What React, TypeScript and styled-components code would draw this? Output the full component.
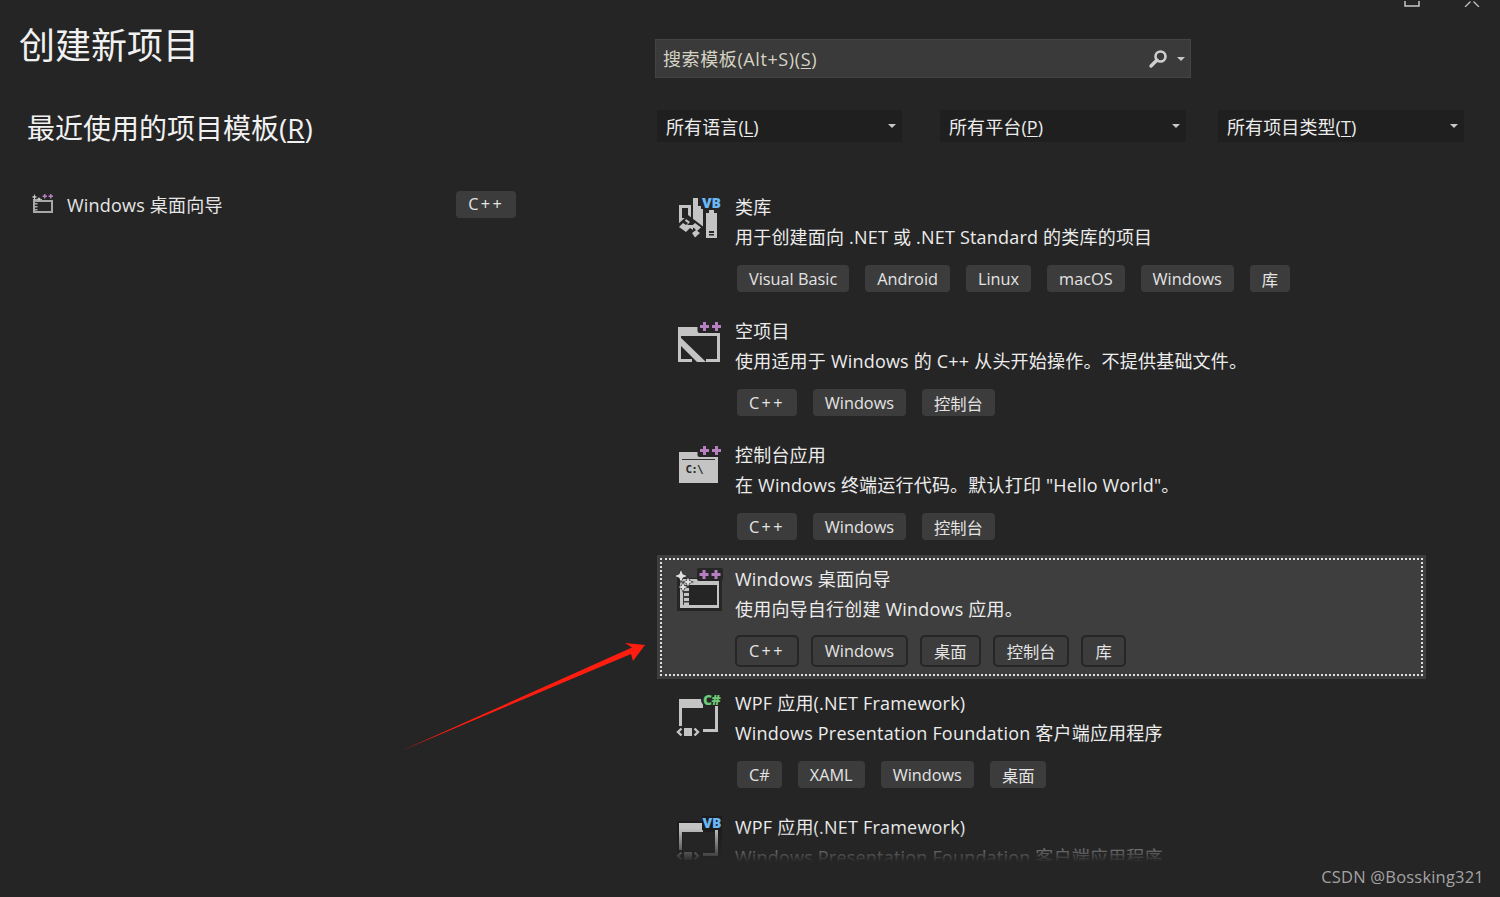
import React from 'react';
import styled, { createGlobalStyle } from 'styled-components';

const GlobalStyle = createGlobalStyle`
  html, body { margin: 0; padding: 0; background: #252525; }
  body { font-family: "Open Sans", "Noto Sans CJK SC", sans-serif; }
`;

const Page = styled.div`
  position: relative;
  width: 1500px;
  height: 897px;
  overflow: hidden;
  background: #252525;
  color: #f1f1f1;
`;

const WindowBar = styled.div`
  display: flex;
  justify-content: flex-end;
  align-items: flex-end;
  gap: 44px;
  height: 7px;
  padding-right: 20px;
  overflow: hidden;
  svg { flex: none; display: block; }
`;

const Main = styled.div`
  display: grid;
  grid-template-columns: 655px 536px;
`;

const LeftColumn = styled.div`
  display: flex;
  flex-direction: column;
`;

const PageTitle = styled.h1`
  margin: 14px 0 0 19px;
  font-size: 36px;
  line-height: 50px;
  font-weight: 400;
`;

const RecentTitle = styled.h2`
  margin: 37px 0 0 27px;
  font-size: 28px;
  line-height: 40px;
  font-weight: 400;
`;

const RecentRow = styled.div`
  display: flex;
  align-items: center;
  width: 484px;
  height: 28px;
  margin: 42px 0 0 32px;
`;

const RecentName = styled.span`
  flex: 1;
  margin-left: 13px;
  font-size: 18px;
  letter-spacing: 0.2px;
  color: #e6e6e6;
`;

const RightColumn = styled.div`
  display: flex;
  flex-direction: column;
`;

const SearchBox = styled.div`
  display: flex;
  align-items: center;
  box-sizing: border-box;
  height: 39px;
  margin-top: 32px;
  padding: 0 5px 0 7px;
  background: #3a3a3a;
  border: 1px solid #444444;
  font-size: 18px;
  color: #d6d3c4;
`;

const SearchText = styled.span`
  flex: 1;
  letter-spacing: 0.6px;
  margin-top: -2px;
`;

const Caret = styled.span`
  flex: none;
  width: 0;
  height: 0;
  border-left: 4.500px solid transparent;
  border-right: 4.500px solid transparent;
  border-top: 4.500px solid #c8c8c8;
`;

const FilterRow = styled.div`
  display: flex;
  width: 807px;
  margin: 32px 0 0 2px;
`;

const Filter = styled.div<{ $width: number; $gap: number }>`
  display: flex;
  align-items: center;
  justify-content: space-between;
  box-sizing: border-box;
  flex: none;
  width: ${p => p.$width}px;
  height: 32px;
  margin-right: ${p => p.$gap}px;
  padding: 0 6px 0 9px;
  background: #1f1f1f;
  font-size: 18px;
  letter-spacing: 0.1px;
  color: #ececec;
`;

const Key = styled.span`
  text-decoration: underline;
  text-underline-offset: 2px;
`;

const TemplateList = styled.div`
  position: relative;
  width: 800px;
  height: 679px;
  margin-top: 41px;
  overflow: hidden;
`;

const ListFade = styled.div`
  position: absolute;
  left: 0;
  right: 0;
  bottom: 0;
  height: 34px;
  background: linear-gradient(to bottom, rgba(37, 37, 37, 0), #252525);
`;

const Row = styled.div<{ $selected?: boolean }>`
  display: flex;
  box-sizing: border-box;
  width: 769px;
  height: 124px;
  margin-left: 2px;
  padding: 12px 0 0 18px;
  background: ${p => (p.$selected ? '#3e3e3e' : 'transparent')};
  outline: ${p => (p.$selected ? '2px dotted #e2e2e2' : 'none')};
  outline-offset: -5px;
`;

const IconSlot = styled.div`
  flex: none;
  width: 48px;
  height: 48px;
  margin: 1px 12px 0 0;
  svg { display: block; overflow: visible; }
`;

const RowBody = styled.div`
  display: flex;
  flex-direction: column;
`;

const RowTitle = styled.div`
  font-size: 18px;
  line-height: 24px;
  letter-spacing: 0.2px;
  color: #ececec;
`;

const RowText = styled.div`
  margin-top: 6px;
  font-size: 18px;
  line-height: 24px;
  letter-spacing: 0.2px;
  color: #ececec;
  white-space: nowrap;
`;

const TagRow = styled.div<{ $selected?: boolean }>`
  display: flex;
  gap: ${p => (p.$selected ? 12 : 16)}px;
  margin: ${p => (p.$selected ? '14px 0 0 0' : '16px 0 0 2px')};
`;

const Tag = styled.span<{ $selected?: boolean; $spaced?: boolean }>`
  display: flex;
  align-items: center;
  box-sizing: border-box;
  height: ${p => (p.$selected ? 32 : 27)}px;
  padding: 0 12px;
  border-radius: ${p => (p.$selected ? 5 : 4)}px;
  border: ${p => (p.$selected ? '2px solid #262626' : 'none')};
  background: #3c3c3c;
  font-size: 16.300px;
  letter-spacing: ${p => (p.$spaced ? 2.300 : 0)}px;
  color: #e4e4e4;
  white-space: nowrap;
`;

const ArrowLayer = styled.svg`
  position: absolute;
  left: 395px;
  top: 640px;
`;

const Watermark = styled.div`
  position: absolute;
  right: 16px;
  bottom: 9px;
  font-size: 16.500px;
  line-height: 22px;
  letter-spacing: 0.2px;
  color: #a3a3a3;
`;

const GRAY = '#c4c4c4';
const PURPLE = '#b57fc0';
const BLUE = '#6ab7f5';
const GREEN = '#6fca78';
const BADGE_FONT = "'Open Sans', sans-serif";

const Pluses = ({ x, y, back = '#252525' }: { x: number; y: number; back?: string }) => (
  <g transform={`translate(${x} ${y})`}>
    <rect x={-2} y={-1} width={26} height={13} rx={2} fill={back} />
    <path d="M3.500 1h3v3h3v3h-3v3h-3v-3h-3v-3h3z" fill={PURPLE} />
    <path d="M15.500 1h3v3h3v3h-3v3h-3v-3h-3v-3h3z" fill={PURPLE} />
  </g>
);

const LibraryIcon = () => (
  <svg width="48" height="48" viewBox="0 0 48 48">
    <path fillRule="evenodd" d="M4 9h12v22H4zM7 12v10h6V12z" fill={GRAY} />
    <path d="M18 2h5v8h5v24H18z" fill={GRAY} />
    <path fillRule="evenodd" d="M31 17h3v-3h5v3h3v25H31zM34 35v2h5v-2zM34 38v1.500h5V38z" fill={GRAY} />
    <rect x={26} y={0} width={21} height={13} fill="#252525" />
    <path d="M13 19l17 13-2 4-9 9-4-1-14-10 1-5z" fill="#252525" />
    <path d="M11 23l4 3-3 3h6v5l-3-2-4 4-7-5 4-4 3 2 2-2-3-2zM20 27l6 4.500-4 3.500-3-3-3-1.500zM17 37l4-3 4 3-5 4.500z" fill={GRAY} />
    <text x={27} y={12} fontFamily={BADGE_FONT} fontWeight={800} fontSize={14} letterSpacing={-0.3} fill={BLUE}>VB</text>
  </svg>
);

const EmptyIcon = () => (
  <svg width="48" height="48" viewBox="0 0 48 48">
    <path d="M3 7h23v6h19v29H31v-3h11V16H6v23h11v3H3z" fill={GRAY} />
    <path d="M3 15l28 27h-9L3 23z" fill={GRAY} />
    <Pluses x={24.500} y={1} />
  </svg>
);

const ConsoleIcon = () => (
  <svg width="48" height="48" viewBox="0 0 48 48">
    <path d="M4 8h39v31H4z" fill={GRAY} />
    <rect x={7} y={15} width={33} height={1} fill="#333333" />
    <text x={10.500} y={29} fontFamily="'DejaVu Sans Mono', monospace" fontWeight={700} fontSize={11} letterSpacing={-0.9} fill="#2b2b2b">C:\</text>
    <Pluses x={24.500} y={1} />
  </svg>
);

const WizardIcon = () => (
  <svg width="48" height="48" viewBox="0 0 48 48">
    <rect x={2} y={10} width={45} height={33} fill="#262626" />
    <path fillRule="evenodd" d="M5 11h39v29H5zM8 17v20h34V17z" fill={GRAY} />
    <rect x={14} y={17} width={28} height={20} fill="#252525" />
    <rect x={8} y={17} width={6} height={20} fill="#3a3a3a" />
    <path d="M9 20h5v3H9zM9 25h5v3H9zM9 30h5v3H9zM9 34.500h5v2.500H9z" fill={GRAY} />
    <g fill="#e0e0e0" stroke="#262626" strokeWidth={1.200} paintOrder="stroke">
      <path d="M6 2l1.700 4.300 4.300 1.700-4.300 1.700-1.700 4.300-1.700-4.300-4.300-1.700 4.300-1.700z" />
      <path d="M13 9.500l1.300 3.200 3.200 1.300-3.200 1.300-1.300 3.200-1.300-3.200-3.200-1.300 3.200-1.300z" />
      <path d="M8 14.500l1.300 3.200 3.200 1.300-3.200 1.300-1.300 3.200-1.300-3.200-3.200-1.300 3.200-1.300z" />
    </g>
    <Pluses x={24} y={1} back="#262626" />
  </svg>
);

const WpfShape = () => (
  <>
    <path d="M4 7h24v9H7v18H4z" fill={GRAY} />
    <path d="M40 14h3v26H28v-3h12z" fill={GRAY} />
    <rect x={9} y={36} width={8} height={8} fill={GRAY} />
    <path d="M6.500 36.500l-3.500 3.500 3.500 3.500M19.500 36.500l3.500 3.500-3.500 3.500" fill="none" stroke={GRAY} strokeWidth={2.400} />
  </>
);

const WpfCsIcon = () => (
  <svg width="48" height="48" viewBox="0 0 48 48">
    <WpfShape />
    <rect x={26} y={0} width={22} height={14} rx={6} fill="#252525" />
    <text x={28} y={12.500} fontFamily={BADGE_FONT} fontWeight={800} fontSize={14} letterSpacing={-0.6} fill={GREEN}>C#</text>
  </svg>
);

const WpfVbIcon = () => (
  <svg width="48" height="48" viewBox="0 0 48 48">
    <path d="M2 5h27v9h18v28H27v3H2z" fill="#1c1c1c" />
    <rect x={8} y={16} width={32} height={19} fill="#252525" />
    <WpfShape />
    <rect x={27} y={0} width={20} height={14} fill="#1c1c1c" />
    <text x={27.500} y={12} fontFamily={BADGE_FONT} fontWeight={800} fontSize={14} letterSpacing={-0.3} fill={BLUE}>VB</text>
  </svg>
);

const SmallWizardIcon = () => (
  <svg width="22" height="22" viewBox="0 0 22 22">
    <path fillRule="evenodd" d="M1 6h20v14H1zM3 9v9h16V9z" fill="#a8a8a8" />
    <path d="M3 10h2.500v1.500H3zM3 13h2.500v1.500H3zM3 16h2.500v1.500H3z" fill="#a8a8a8" />
    <path d="M2.500 1l.8 2.200 2.200.8-2.200.8-.8 2.200-.8-2.200-2.200-.8 2.200-.8zM7 4l.7 1.300 1.300.7-1.300.7-.7 1.300-.7-1.300-1.300-.7 1.300-.7z" fill="#cfcfcf" />
    <rect x={10} y={0} width={12} height={7} fill="#252525" />
    <path d="M12 1h1.500v1.500H15v1.500h-1.500v1.500H12V4h-1.500V2.500H12zM18 1h1.500v1.500H21v1.500h-1.500v1.500H18V4h-1.500V2.500H18z" fill={PURPLE} />
  </svg>
);

const SearchGlyph = styled.svg`
  flex: none;
  margin-right: 8px;
`;

const SearchIcon = () => (
  <SearchGlyph width="22" height="22" viewBox="0 0 22 22">
    <circle cx="13.500" cy="8.500" r="5" fill="none" stroke="#cfcfcf" strokeWidth="2.600" />
    <path d="M10 12L4 18" stroke="#cfcfcf" strokeWidth="3.400" strokeLinecap="round" />
  </SearchGlyph>
);

interface Template {
  icon: React.ReactNode;
  title: string;
  text: string;
  tags: string[];
  selected?: boolean;
}

const templates: Template[] = [
  {
    icon: <LibraryIcon />,
    title: '类库',
    text: '用于创建面向 .NET 或 .NET Standard 的类库的项目',
    tags: ['Visual Basic', 'Android', 'Linux', 'macOS', 'Windows', '库'],
  },
  {
    icon: <EmptyIcon />,
    title: '空项目',
    text: '使用适用于 Windows 的 C++ 从头开始操作。不提供基础文件。',
    tags: ['C++', 'Windows', '控制台'],
  },
  {
    icon: <ConsoleIcon />,
    title: '控制台应用',
    text: '在 Windows 终端运行代码。默认打印 "Hello World"。',
    tags: ['C++', 'Windows', '控制台'],
  },
  {
    icon: <WizardIcon />,
    title: 'Windows 桌面向导',
    text: '使用向导自行创建 Windows 应用。',
    tags: ['C++', 'Windows', '桌面', '控制台', '库'],
    selected: true,
  },
  {
    icon: <WpfCsIcon />,
    title: 'WPF 应用(.NET Framework)',
    text: 'Windows Presentation Foundation 客户端应用程序',
    tags: ['C#', 'XAML', 'Windows', '桌面'],
  },
  {
    icon: <WpfVbIcon />,
    title: 'WPF 应用(.NET Framework)',
    text: 'Windows Presentation Foundation 客户端应用程序',
    tags: [],
  },
];

const filters = [
  { label: '所有语言', key: 'L', width: 245, gap: 38 },
  { label: '所有平台', key: 'P', width: 246, gap: 32 },
  { label: '所有项目类型', key: 'T', width: 246, gap: 0 },
];

export default function App() {
  return (
    <Page>
      <GlobalStyle />
      <WindowBar>
        <svg width="16" height="6" viewBox="0 0 16 6">
          <path d="M1 0v5h14V0" fill="none" stroke="#c8c8c8" strokeWidth="1.500" />
        </svg>
        <svg width="16" height="6" viewBox="0 0 16 6">
          <path d="M1 6L6.500 0.500M15 6L9.500 0.500" fill="none" stroke="#c8c8c8" strokeWidth="1.200" />
        </svg>
      </WindowBar>
      <Main>
        <LeftColumn>
          <PageTitle>创建新项目</PageTitle>
          <RecentTitle>
            最近使用的项目模板(<Key>R</Key>)
          </RecentTitle>
          <RecentRow>
            <SmallWizardIcon />
            <RecentName>Windows 桌面向导</RecentName>
            <Tag $spaced>C++</Tag>
          </RecentRow>
        </LeftColumn>
        <RightColumn>
          <SearchBox>
            <SearchText>
              搜索模板(Alt+S)(<Key>S</Key>)
            </SearchText>
            <SearchIcon />
            <Caret />
          </SearchBox>
          <FilterRow>
            {filters.map(f => (
              <Filter key={f.key} $width={f.width} $gap={f.gap}>
                <span>
                  {f.label}(<Key>{f.key}</Key>)
                </span>
                <Caret />
              </Filter>
            ))}
          </FilterRow>
          <TemplateList>
            {templates.map((t, i) => (
              <Row key={i} $selected={t.selected}>
                <IconSlot>{t.icon}</IconSlot>
                <RowBody>
                  <RowTitle>{t.title}</RowTitle>
                  <RowText>{t.text}</RowText>
                  <TagRow $selected={t.selected}>
                    {t.tags.map(tag => (
                      <Tag key={tag} $selected={t.selected} $spaced={tag === 'C++'}>
                        {tag}
                      </Tag>
                    ))}
                  </TagRow>
                </RowBody>
              </Row>
            ))}
            <ListFade />
          </TemplateList>
        </RightColumn>
      </Main>
      <ArrowLayer width="255" height="116" viewBox="395 640 255 116">
        <polygon points="401,751 632,647.500 625,643 645,645 633,661 631,654" fill="#ff1d10" />
      </ArrowLayer>
      <Watermark>CSDN @Bossking321</Watermark>
    </Page>
  );
}
